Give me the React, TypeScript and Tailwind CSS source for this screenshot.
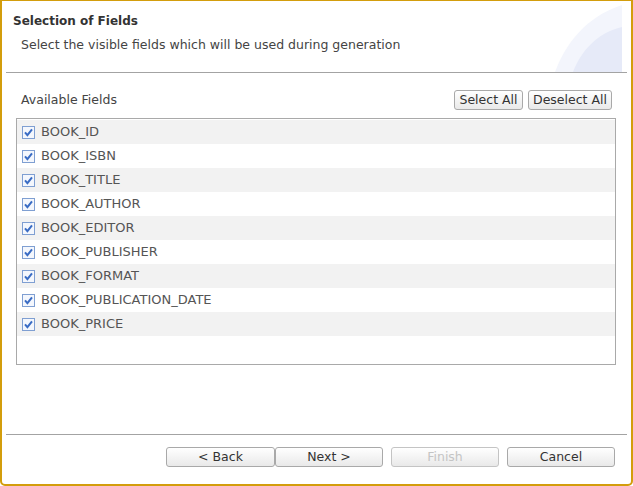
import React from 'react';

const FIELDS = [
  'BOOK_ID',
  'BOOK_ISBN',
  'BOOK_TITLE',
  'BOOK_AUTHOR',
  'BOOK_EDITOR',
  'BOOK_PUBLISHER',
  'BOOK_FORMAT',
  'BOOK_PUBLICATION_DATE',
  'BOOK_PRICE',
];

function CheckBox() {
  return (
    <svg width="13" height="13" viewBox="0 0 13 13" className="shrink-0">
      <rect x="0.5" y="0.5" width="12" height="12" fill="#f4f7fd" stroke="#7f9fd2" />
      <path d="M3 6.4 L5.4 9.2 L10 3.4" fill="none" stroke="#3a6cc4" strokeWidth="2" />
    </svg>
  );
}

function Btn({ children, disabled, className }: { children: React.ReactNode; disabled?: boolean; className?: string }) {
  return (
    <button
      disabled={disabled}
      className={
        'h-[20px] rounded-[3px] border bg-gradient-to-b from-white to-[#e9e9e9] text-[12.5px] leading-none ' +
        (disabled ? 'border-[#c4c4c4] text-[#c4c4c4] ' : 'border-[#a9a9a9] text-[#333] ') +
        (className ?? '')
      }
    >
      {children}
    </button>
  );
}

export default function App() {
  return (
    <div
      className="w-[633px] h-[486px] bg-white border-t border-x-2 border-b-2 border-[#d39d0c] rounded-b-[5px] flex flex-col"
      style={{ fontFamily: "'DejaVu Sans', Verdana, sans-serif" }}
    >
      {/* ── header ─────────────────────────── */}
      <div className="h-[71px] flex shrink-0">
        <div className="flex-1 pt-[11px]">
          <div className="pl-[11px] text-[12px] font-bold text-[#333]">Selection of Fields</div>
          <div className="pl-[19px] pt-[6px] text-[12.5px] text-[#444]">
            Select the visible fields which will be used during generation
          </div>
        </div>
        <svg width="67" height="67" viewBox="0 0 67 67" className="mt-[4px] mr-[9px]">
          <path d="M0 67 C10 40 30 12 67 0 L67 67 Z" fill="#f3f5fc" />
          <path d="M18 67 C26 46 42 28 67 22 L67 67 Z" fill="#e6eaf8" />
        </svg>
      </div>
      <div className="mx-[4px] h-px bg-[#a3a3a3]" />

      {/* ── field list ─────────────────────── */}
      <div className="pl-[14px] pr-[15px] pt-[17px] flex-1">
        <div className="flex items-center justify-between">
          <span className="pl-[5px] text-[12.5px] text-[#444]">Available Fields</span>
          <div className="flex gap-[5px] mr-[4px]">
            <Btn className="w-[69px]">Select All</Btn>
            <Btn className="w-[84px]">Deselect All</Btn>
          </div>
        </div>
        <div className="mt-[8px] h-[247px] border border-[#a9a9a9] py-px">
          {FIELDS.map((f, i) => (
            <div
              key={f}
              className={'h-[24px] flex items-center gap-[6px] pl-[5px] ' + (i % 2 === 0 ? 'bg-[#f2f2f2]' : 'bg-white')}
            >
              <CheckBox />
              <span className="text-[13px] text-[#555]">{f}</span>
            </div>
          ))}
        </div>
      </div>

      {/* ── footer ─────────────────────────── */}
      <div className="mx-[4px] h-px bg-[#a3a3a3]" />
      <div className="h-[49px] flex items-start justify-end pr-[16px] pt-[12px]">
        <Btn className="w-[109px]">&lt; Back</Btn>
        <Btn className="w-[108px]">Next &gt;</Btn>
        <Btn disabled className="w-[108px] ml-[8px]">Finish</Btn>
        <Btn className="w-[108px] ml-[8px]">Cancel</Btn>
      </div>
    </div>
  );
}
